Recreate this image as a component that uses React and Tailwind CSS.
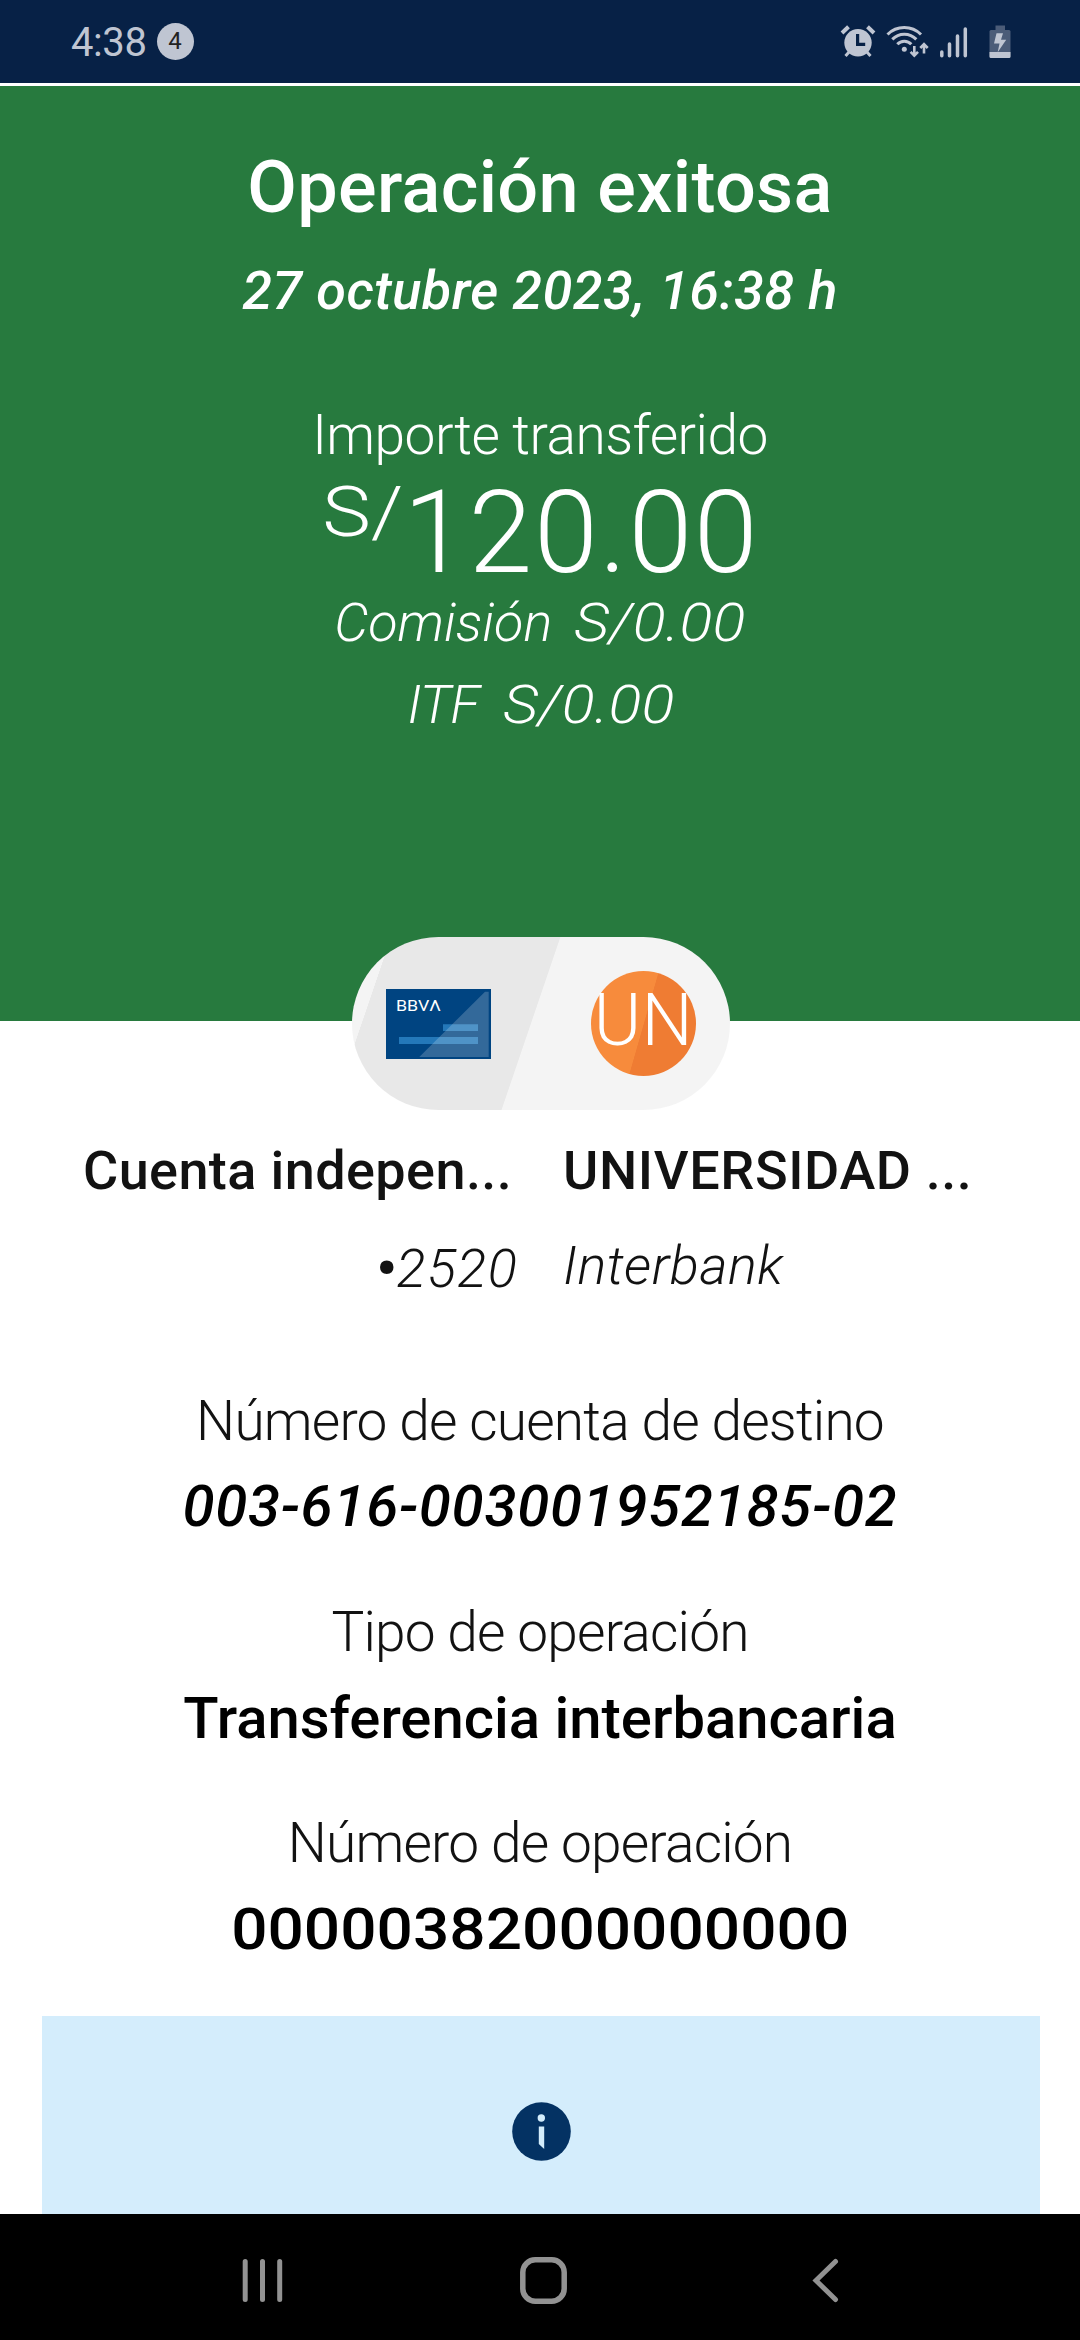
import React from "react";

function AlarmIcon() {
  return (
    <svg className="h-[34px] w-[36px]" viewBox="840 24 36 34" fill="none">
      <circle cx="858" cy="42.7" r="13.7" fill="#bfc5d2" />
      <path d="M857.6 34v10.3h7.6" stroke="#072146" strokeWidth="3.2" />
      <path d="M842 33l6.5-6.3M874 33l-6.5-6.3" stroke="#bfc5d2" strokeWidth="4" />
      <path d="M845.5 56l4-4.5M870.5 56l-4-4.5" stroke="#bfc5d2" strokeWidth="3" />
    </svg>
  );
}

function WifiIcon() {
  return (
    <svg className="h-[34px] w-[44px]" viewBox="886 24 44 34" fill="none" stroke="#bfc5d2">
      <path d="M887.5 34.5a23.5 23.5 0 0 1 33.5 0" strokeWidth="3" />
      <path d="M892.3 39.4a16.5 16.5 0 0 1 24 0" strokeWidth="3" />
      <path d="M897.3 44.3a9.6 9.6 0 0 1 14 0" strokeWidth="3" />
      <circle cx="904.3" cy="49.3" r="2.5" fill="#bfc5d2" stroke="none" />
      <path d="M914.3 46v10M910.6 51.8l3.7 3.9 3.7-3.9M924 53.5v-9.5M920.3 48l3.7-3.9 3.7 3.9" strokeWidth="2.6" />
    </svg>
  );
}

function SignalIcon() {
  return (
    <svg className="h-[34px] w-[28px]" viewBox="940 24 28 34" stroke="#bfc5d2" strokeWidth="3.5" strokeLinecap="round">
      <path d="M941.8 52v3.8M949.5 44v11.8M957.5 36v19.8M965.3 29v26.8" />
    </svg>
  );
}

function BatteryIcon() {
  return (
    <svg className="h-[34px] w-[22px]" viewBox="988.5 24 22 34">
      <path d="M995 25.5h9.5v4.5h-9.5z" fill="#4b5c78" />
      <rect x="989" y="30" width="21" height="28" rx="1.5" fill="#4b5c78" />
      <path d="M989 52h21v4.5a1.5 1.5 0 0 1-1.5 1.5h-18a1.5 1.5 0 0 1-1.5-1.5z" fill="#bfc5d2" />
      <path d="M996 33.3h6.5l-2 6.5h5.2l-8.5 12.4 1.8-8.7h-5.5z" fill="#bfc5d2" />
    </svg>
  );
}

function StatusBar() {
  return (
    <header className="flex h-[83px] shrink-0 items-start justify-between bg-[#072146] pr-[69px] pl-[71px] text-[#bfc5d2]">
      <div className="mt-[19px] flex items-start">
        <span className="text-[40px] leading-[48px] tracking-[-0.4px]">4:38</span>
        <span className="mt-1 ml-2.5 flex size-[37px] items-center justify-center rounded-full bg-[#bfc5d2] text-2xl leading-[37px] text-[#222]">4</span>
      </div>
      <div className="mt-6 flex">
        <AlarmIcon />
        <div className="ml-2.5"><WifiIcon /></div>
        <div className="ml-2.5"><SignalIcon /></div>
        <div className="ml-[21px]"><BatteryIcon /></div>
      </div>
    </header>
  );
}

function AccountCard() {
  return (
    <svg className="ml-[34px] h-[70px] w-[105px]" viewBox="0 0 105 70">
      <path d="M0 0h105v70H0z" fill="#004481" />
      <path d="M57 35.3h35v6.7H57zM13 48h79v7H13z" fill="#2478b9" />
      <path d="M99 2.7h3.7V68H33.3z" fill="#fff" fillOpacity=".2" />
      <text x="10" y="22" fill="#fff" fontSize="15.5" fontWeight="400" fontFamily="Roboto, sans-serif" textLength="45" lengthAdjust="spacingAndGlyphs">BBVΛ</text>
    </svg>
  );
}

function TransferPill() {
  return (
    <div className="relative z-10 mx-auto -mt-[84px] flex h-[173px] w-[378px] shrink-0 translate-x-px items-center justify-between overflow-hidden rounded-full bg-[linear-gradient(108.8deg,#f4f4f4_8.9%,#e8e8e8_9%,#e8e8e8_47.6%,#f4f4f4_47.8%)] pr-[34px] text-white">
      <AccountCard />
      <div className="flex size-[105px] items-center justify-center rounded-full bg-[linear-gradient(106deg,#f78b3c_50%,#ef7c33_50.5%)]">
        <span className="-mt-1.5 text-[72px] leading-[72px] font-light tracking-[0.5px]">UN</span>
      </div>
    </div>
  );
}

function Detail({ label, children }) {
  return (
    <section className="flex h-[211px] shrink-0 flex-col items-center">
      <span className="text-[55px] leading-[64px] font-light tracking-[-0.8px] text-[#121212]">{label}</span>
      {children}
    </section>
  );
}

export default function App() {
  return (
    <div className="flex h-[2340px] w-[1080px] flex-col overflow-hidden bg-white font-['Roboto',sans-serif] whitespace-nowrap">
      <StatusBar />
      <main className="flex min-h-0 grow flex-col overflow-hidden">
        <section className="mt-[3px] flex h-[935px] shrink-0 flex-col items-center bg-[#277a3e] pt-[62px] text-white">
          <h1 className="text-[72px] leading-[80px] font-medium tracking-[0.35px]">Operación exitosa</h1>
          <p className="mt-[31px] text-[54px] leading-[64px] font-medium tracking-[0.45px] italic">27 octubre 2023, 16:38 h</p>
          <p className="mt-20 text-[55px] leading-[64px] font-light tracking-[-0.5px]">Importe transferido</p>
          <div className="mt-2 flex items-start font-light">
            <span className="mt-[2px] ml-[13px] origin-right scale-x-[1.17] text-[70px] leading-[70px]">S/</span>
            <span className="text-[115px] leading-[116px] tracking-[1.6px]">120.00</span>
          </div>
          <div className="flex gap-[22px] text-[54px] leading-[64px] font-light italic">
            <span>Comisión</span>
            <span className="mr-5 origin-left scale-x-[1.13]">S/0.00</span>
          </div>
          <div className="mt-[18px] flex gap-6 text-[54px] leading-[64px] font-light italic">
            <span className="tracking-[-0.9px]">ITF</span>
            <span className="mr-[18px] origin-left scale-x-[1.13]">S/0.00</span>
          </div>
        </section>

        <TransferPill />

        <section className="mt-[29px] grid h-[239px] shrink-0 grid-cols-[435px_1fr] gap-x-[45px] pl-[83px] text-[54px] leading-[64px] text-[#121212]">
          <div className="flex flex-col">
            <span className="font-medium tracking-[0.4px]">Cuenta indepen...</span>
            <span className="mt-[34px] flex self-end font-light italic">
              <span className="font-black not-italic">•</span>
              <span className="tracking-[1.3px]">2520</span>
            </span>
          </div>
          <div className="flex flex-col">
            <span className="font-medium tracking-[0.6px]">UNIVERSIDAD ...</span>
            <span className="mt-[31px] font-light tracking-[0.5px] italic">Interbank</span>
          </div>
        </section>

        <div className="mt-[11px] flex h-[627px] shrink-0 flex-col text-black">
          <Detail label="Número de cuenta de destino">
            <span className="mt-[21px] text-[58px] leading-[64px] font-medium tracking-[0.8px] italic">003-616-003001952185-02</span>
          </Detail>
          <Detail label="Tipo de operación">
            <span className="mt-[22px] text-[58px] leading-[64px] font-medium">Transferencia interbancaria</span>
          </Detail>
          <Detail label="Número de operación">
            <span className="mt-[22px] scale-x-[1.103] text-[58px] leading-[64px] font-medium">00000382000000000</span>
          </Detail>
        </div>

        <aside className="mr-10 ml-[42px] flex h-[198px] shrink-0 justify-center bg-[#d4edfc] pt-[86px]">
          <svg className="size-[59px]" viewBox="0 0 59 59">
            <circle cx="29.5" cy="29.5" r="29.3" fill="#043263" />
            <circle cx="29.3" cy="16" r="3.7" fill="#d4edfc" />
            <path d="M26.8 24.5h5.4v22.5l-5.4-5z" fill="#d4edfc" />
          </svg>
        </aside>
      </main>

      <nav className="flex h-[126px] shrink-0 items-start bg-black pt-[43px]">
        <svg className="ml-[242px] h-[47px] w-[42px]" viewBox="0 0 42 47" stroke="#929292" strokeWidth="5" strokeLinecap="round">
          <path d="M3.2 4.5v38M20.5 4.5v38M37.7 4.5v38" />
        </svg>
        <svg className="ml-[236px] size-[47px]" viewBox="0 0 47 47" fill="none" stroke="#929292" strokeWidth="5.5">
          <rect x="2.8" y="2.8" width="41.4" height="41.4" rx="12.5" />
        </svg>
        <svg className="ml-[245px] h-[47px] w-[28px]" viewBox="0 0 28 47" fill="none" stroke="#929292" strokeWidth="5" strokeLinecap="round">
          <path d="M23.5 4.5L4 23.5l19.5 19" />
        </svg>
      </nav>
    </div>
  );
}
